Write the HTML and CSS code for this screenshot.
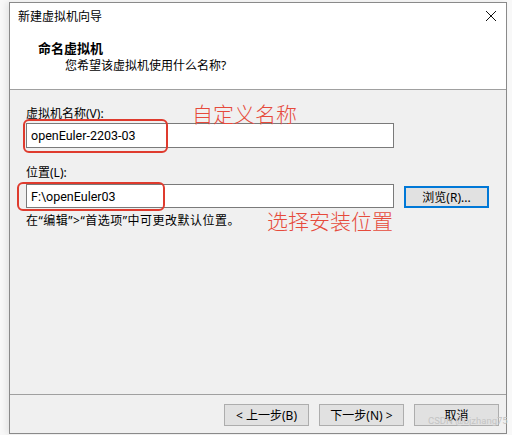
FILE: index.html
```html
<!DOCTYPE html>
<html lang="zh-CN">
<head>
    <meta charset="UTF-8">
    <title>新建虚拟机向导</title>
    <link rel="stylesheet" href="styles.css">
</head>
<body>
    <div class="window">
        <div class="header">
            <div class="titlebar">
                <span class="title">新建虚拟机向导</span>
                <svg class="close" width="12" height="12" viewBox="0 0 12 12">
                    <path d="M1 1 L11 11 M11 1 L1 11" stroke="#111" stroke-width="1" fill="none"/>
                </svg>
            </div>
            <div class="heading">命名虚拟机</div>
            <div class="subtitle">您希望该虚拟机使用什么名称?</div>
        </div>
        <div class="content">
            <div class="label">虚拟机名称(V):</div>
            <div class="field field-name">openEuler-2203-03</div>
            <div class="label label-loc">位置(L):</div>
            <div class="row">
                <div class="field field-loc">F:\openEuler03</div>
                <button class="btn btn-focus">浏览(R)...</button>
            </div>
            <div class="hint">在“编辑”&gt;“首选项”中可更改默认位置。</div>
        </div>
        <div class="footer">
            <button class="btn">&lt; 上一步(B)</button>
            <button class="btn">下一步(N) &gt;</button>
            <button class="btn">取消</button>
        </div>
    </div>

    <!-- red annotations drawn over the screenshot -->
    <div class="mark mark-name"></div>
    <div class="mark mark-loc"></div>
    <div class="note note-name">自定义名称</div>
    <div class="note note-loc">选择安装位置</div>
    <div class="watermark">CSDN @bjzhang75</div>
</body>
</html>
```

FILE: styles.css
```css
body {
    margin: 0;
    padding-top: 2px;
    background-color: #f8f8f8;
    font-family: "Noto Sans", "Noto Sans CJK SC", sans-serif;
    font-size: 12px;
    color: #000;
    position: relative;
    height: 435px;
    overflow: hidden;
}

.window {
    box-sizing: border-box;
    margin-left: 9px;
    width: 498px;
    height: 432px;
    border: 1px solid #8a8a8a;
    background-color: #f0f0f0;
    box-shadow: -3px 0 6px rgba(0,0,0,0.08);
    display: flex;
    flex-direction: column;
}

.header {
    background-color: #ffffff;
    border-bottom: 1px solid #a0a0a0;
    height: 86px;
}

.titlebar {
    height: 26px;
    display: flex;
    align-items: center;
    justify-content: space-between;
    padding: 0 9px 0 8px;
}

.title {
    font-size: 12px;
}

.heading {
    margin-top: 10px;
    padding-left: 28px;
    font-weight: bold;
    font-size: 13px;
    line-height: 18px;
}

.subtitle {
    padding-left: 55px;
    line-height: 18px;
}

.content {
    flex: 1;
    padding: 16px 0 0 16px;
}

.label {
    line-height: 16px;
}

.label-loc {
    margin-top: 17px;
}

.field {
    box-sizing: border-box;
    width: 368px;
    background-color: #ffffff;
    border: 1px solid #7a7a7a;
    padding-left: 4px;
    font-family: Roboto, "Noto Sans CJK SC", sans-serif;
    font-size: 12.5px;
    display: flex;
    align-items: center;
}

.field-name {
    margin-top: 1px;
    height: 25px;
}

.field-loc {
    height: 24px;
}

.row {
    margin-top: 3px;
    display: flex;
    align-items: center;
    gap: 10px;
}

.hint {
    margin-top: 5px;
    line-height: 16px;
    letter-spacing: 0.5px;
}

.btn {
    box-sizing: border-box;
    width: 85px;
    height: 22px;
    background-color: #e1e1e1;
    border: 1px solid #adadad;
    font-family: "Noto Sans", "Noto Sans CJK SC", sans-serif;
    font-size: 12px;
    padding: 0;
    color: #000;
}

.btn-focus {
    border: 2px solid #0078d7;
    margin-top: 2px;
}

.footer {
    height: 39px;
    border-top: 1px solid #a0a0a0;
    box-sizing: border-box;
    display: flex;
    justify-content: flex-end;
    align-items: flex-start;
    gap: 10px;
    padding: 9px 7px 0 0;
}

.mark {
    position: absolute;
    box-sizing: border-box;
    border: 2px solid #df3b2e;
    border-radius: 6px;
}

.mark-name {
    left: 23px;
    top: 119px;
    width: 145px;
    height: 34px;
}

.mark-loc {
    left: 17px;
    top: 182px;
    width: 148px;
    height: 29px;
}

.note {
    position: absolute;
    color: #e64a3b;
    font-family: "Noto Sans CJK SC", sans-serif;
    font-size: 21px;
    line-height: 24px;
    font-weight: 300;
    white-space: nowrap;
}

.note-name {
    left: 192px;
    top: 101px;
}

.note-loc {
    left: 267px;
    top: 208px;
}

.watermark {
    position: absolute;
    left: 428px;
    top: 415px;
    font-family: Roboto, sans-serif;
    font-size: 9.5px;
    color: #c4c4c4;
    white-space: nowrap;
}
```
